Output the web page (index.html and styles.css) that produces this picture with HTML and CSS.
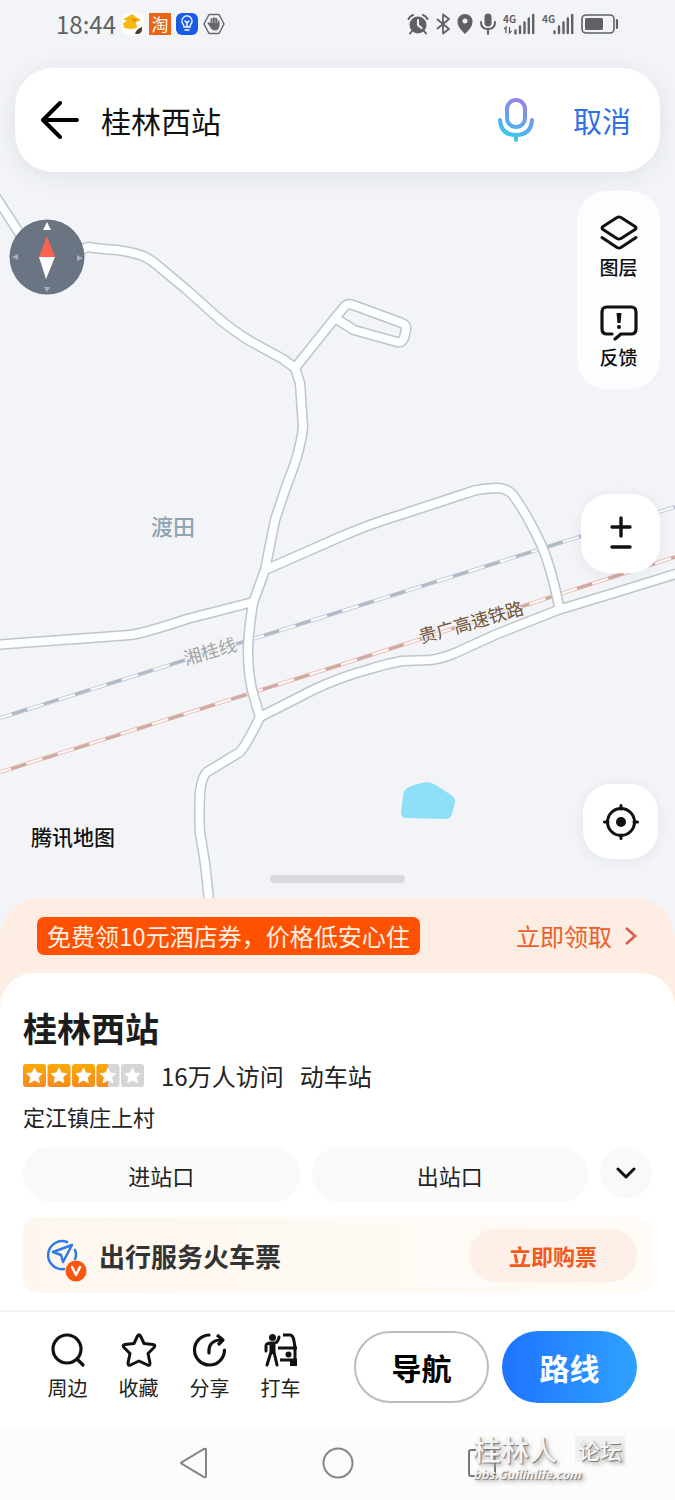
FILE: index.html
```html
<!DOCTYPE html>
<html lang="zh-CN">
<head>
<meta charset="UTF-8">
<meta name="viewport" content="initial-scale=1, width=device-width">
<title>桂林西站</title>
<link rel="stylesheet" href="styles.css">
</head>
<body>
<div class="map">
	<svg class="map-canvas" viewBox="0 0 675 898" preserveAspectRatio="xMidYMin slice">
		<defs>
			<g id="roads">
				<path d="M-6 194L18 231Q32 256 48 257Q68 255 88 247Q100 249 117 250Q132 252 143 256Q150 259 157 265L187 290L217 317Q232 330 250 341L283 359L295 368"/>
				<path d="M295 368L335 318L345 306Q348 303 353 305L402 323Q407 325 406 330L404 338Q402 343 397 342L354 330L335 318"/>
				<path d="M295 368L300 383L303 427Q302 440 295 463L285 490L275 520L265 570L253 603Q248 635 248 650Q248 672 252 690L260 717Q247 744 240 752L207 772Q202 776 200 792Q199 815 200 833Q206 864 209 902"/>
				<path d="M265 570L340 537Q370 524 400 515L467 493Q474 490 483 489L496 488Q507 488 513 495Q525 511 539 540Q550 562 559 606"/>
				<path d="M-6 645L130 635Q145 633 187 619L253 602"/>
				<path d="M260 717L313 690Q340 677 370 669Q385 664 402 661L430 660Q440 659 453 654L497 634L558 610L627 589L682 572"/>
			</g>
		</defs>
		<g class="rail rail-blue">
			<path class="rail-edge" d="M0 718L675 507"/>
			<path class="rail-fill" d="M0 718L675 507"/>
			<path class="rail-dash" d="M12 714L675 507"/>
		</g>
		<g class="rail rail-red">
			<path class="rail-edge" d="M0 772L340 665L675 557"/>
			<path class="rail-fill" d="M0 772L340 665L675 557"/>
			<path class="rail-dash" d="M11 769L340 665L675 557"/>
		</g>
		<use class="road-edge" href="#roads"/>
		<use class="road-fill" href="#roads"/>
		<path class="lake" d="M406 789Q409 786 422 783Q429 781 436 785L451 795Q456 798 455 803L452 814Q450 819 446 819L406 818Q401 818 401 813L403 797Q403 792 406 789Z"/>
		<text class="place" x="173" y="535">渡田</text>
		<text class="rail-name gray" x="210" y="658" transform="rotate(-16 210 651)">湘桂线</text>
		<text class="rail-name brown" x="471" y="629" transform="rotate(-16 471 622)">贵广高速铁路</text>
	</svg>

	<div class="status">
		<span class="clock">18:44</span>
		<div class="notices">
			<svg width="22" height="22" viewBox="0 0 22 22"><rect width="22" height="22" rx="6" fill="#fff"/><path d="M1 6L7 3L10 1L14 4L19 7L14 9L15 15L9 16L2 15L1 10L5 8Z" fill="#f8b912"/><path d="M8 5L17 7L12 9Z" fill="#e98d0c"/><path d="M13 21Q14 16 20 14Q21 19 17 21Z" fill="#4b3f35"/></svg>
			<span class="tao">淘</span>
			<svg width="22" height="22" viewBox="0 0 22 22"><rect width="22" height="22" rx="6" fill="#1a5be6"/><path d="M8 14Q8 12 7 11A5 5 0 1 1 15 11Q14 12 14 14Z M9 17H13M11 14V9M9 8L11 10L13 8" fill="none" stroke="#fff" stroke-width="1.4" stroke-linecap="round"/></svg>
			<svg width="22" height="22" viewBox="0 0 22 22"><path d="M6 1.500H16L21 11L16 20.500H6L1 11Z" fill="none" stroke="#66686b" stroke-width="1.500" stroke-linejoin="round"/><path d="M6.500 13L4.500 10.500Q4.500 8.500 6.500 9.500L7.500 10.500V6Q8.500 4.500 9.500 6V5Q10.500 3.500 12 5V5.500Q13 4 14.500 6V8Q15.500 6.500 16.500 8V13Q15.500 17.500 12 17.500Q8.500 17.500 6.500 13Z" fill="#66686b"/><path d="M9.500 6V10M12 6V10M14.500 7V10" stroke="#f2f4f8" stroke-width=".5"/></svg>
		</div>
		<div class="signals">
			<svg width="22" height="22" viewBox="0 0 22 22"><circle cx="11" cy="12" r="8.500" fill="#5f6163"/><path d="M1.500 6Q3 3 6 2M20.500 6Q19 3 16 2M5 18L3 20.500M17 18L19 20.500" fill="none" stroke="#5f6163" stroke-width="2" stroke-linecap="round"/><path d="M11 7V12L14.500 15" fill="none" stroke="#f2f4f8" stroke-width="2" stroke-linecap="round"/></svg>
			<svg width="14" height="22" viewBox="0 0 14 22"><path d="M1 6L13 16L7 20.500V1.500L13 6L1 16" fill="none" stroke="#5f6163" stroke-width="1.800" stroke-linejoin="round"/></svg>
			<svg width="16" height="22" viewBox="0 0 16 22"><path fill-rule="evenodd" d="M8 1A7.500 7.500 0 0 1 15.500 9Q15.500 14 8 21Q.5 14 .5 9A7.500 7.500 0 0 1 8 1ZM8 5.500A2.500 2.500 0 1 0 8 10.500A2.500 2.500 0 1 0 8 5.500Z" fill="#5f6163"/></svg>
			<svg width="16" height="22" viewBox="0 0 16 22"><rect x="4.500" y="0.500" width="7" height="13" rx="3.500" fill="#5f6163"/><path d="M1 9Q1 16 8 16Q15 16 15 9M8 16V21" fill="none" stroke="#5f6163" stroke-width="2" stroke-linecap="round"/></svg>
			<svg class="signal" width="32" height="22" viewBox="0 0 32 22"><text class="net" x="0" y="10">4G</text><path d="M3 20V14L1 16M6.500 14V20L8.500 18" fill="none" stroke="#5f6163" stroke-width="1.300"/><path d="M12.500 17.500V20.500M17 13.500V20M21.500 9.500V20M25.800 5.500V20M30.200 2V20" stroke="#5f6163" stroke-width="2.400" stroke-linecap="round"/></svg>
			<svg class="signal" width="32" height="22" viewBox="0 0 32 22"><text class="net" x="0" y="10">4G</text><path d="M12.500 18.500V20M17 13.500V20M21.500 9.500V20M25.800 5.500V20M30.200 2V20" stroke="#5f6163" stroke-width="2.400" stroke-linecap="round"/></svg>
			<svg width="38" height="22" viewBox="0 0 38 22"><rect x="1" y="2" width="32" height="18" rx="4" fill="none" stroke="#5f6163" stroke-width="1.600"/><rect x="4" y="5" width="18" height="12" rx="1.500" fill="#5f6163"/><path d="M36 7V15" stroke="#5f6163" stroke-width="2.200" stroke-linecap="round"/></svg>
		</div>
	</div>

	<form class="search">
		<button class="plain" type="button" aria-label="返回">
			<svg width="38" height="38" viewBox="0 0 38 38"><path d="M36 19H2M19 2L2 19L19 36" fill="none" stroke="#000" stroke-width="4" stroke-linecap="round" stroke-linejoin="round"/></svg>
		</button>
		<input class="keyword" type="text" value="桂林西站" aria-label="搜索地点">
		<button class="plain" type="button" aria-label="语音搜索">
			<svg width="38" height="44" viewBox="0 0 38 44">
				<defs><linearGradient id="voice" gradientUnits="userSpaceOnUse" x1="28" y1="2" x2="10" y2="42"><stop offset="0" stop-color="#9a7fe6"/><stop offset=".55" stop-color="#62a5ee"/><stop offset="1" stop-color="#2ed3e8"/></linearGradient></defs>
				<g fill="none" stroke="url(#voice)" stroke-width="4" stroke-linecap="round"><rect x="10" y="2" width="18" height="27" rx="9"/><path d="M3 22Q4 37 19 37Q34 37 35 22M19 37V42"/></g>
			</svg>
		</button>
		<button class="plain cancel" type="button">取消</button>
	</form>

	<div class="tools">
		<div class="tools-left">
			<button class="plain compass" type="button" aria-label="指南针">
				<svg width="76" height="76" viewBox="0 0 76 76"><circle cx="38" cy="38" r="37.500" fill="#66707f" opacity=".97"/><path d="M38 17L46 38H30Z" fill="#fb6350"/><path d="M30 38H46L37 60Z" fill="#fff"/><path d="M34 11L38 3L42 11Z" fill="#fff"/><path d="M3 38L9 35V41ZM74 39L68 36V42ZM35 68H41L38 73Z" fill="#a9b0ba"/></svg>
			</button>
			<span class="brand">腾讯地图</span>
		</div>
		<div class="tools-right">
			<div class="panel">
				<button class="plain tool" type="button">
					<svg width="38" height="36" viewBox="0 0 38 36"><path d="M17 2.500Q19 1.500 21 2.500L35 11.500Q37 13 35 14.500L21 23.500Q19 24.500 17 23.500L3 14.500Q1 13 3 11.500ZM2 22.500L17 32.500Q19 33.500 21 32.500L36 22.500" fill="none" stroke="#111" stroke-width="3" stroke-linecap="round" stroke-linejoin="round"/></svg>
					图层
				</button>
				<button class="plain tool" type="button">
					<svg width="38" height="36" viewBox="0 0 38 36"><path d="M12 29H7Q2 29 2 24V7Q2 2 7 2H31Q36 2 36 7V24Q36 29 31 29H21L15 34" fill="none" stroke="#111" stroke-width="3.200" stroke-linecap="round" stroke-linejoin="round"/><path d="M16.500 8H21.500L20.500 18H17.500Z" fill="#111"/><circle cx="19" cy="22" r="2" fill="#111"/></svg>
					反馈
				</button>
			</div>
			<div class="squares">
				<div class="zoom">
					<button class="plain" type="button" aria-label="放大"><svg width="24" height="24" viewBox="0 0 24 24"><path d="M3 12H21M12 3V21" stroke="#111" stroke-width="3.400" stroke-linecap="round"/></svg></button>
					<button class="plain" type="button" aria-label="缩小"><svg width="24" height="12" viewBox="0 0 24 12"><path d="M3 6H21" stroke="#111" stroke-width="3.400" stroke-linecap="round"/></svg></button>
				</div>
				<button class="plain locate" type="button" aria-label="定位">
					<svg width="38" height="38" viewBox="0 0 38 38"><circle cx="19" cy="19" r="13.500" fill="none" stroke="#111" stroke-width="3"/><circle cx="19" cy="19" r="5" fill="#111"/><path d="M19 2.500V6M19 32V35.500M2.500 19H6M32 19H35.500" stroke="#111" stroke-width="3" stroke-linecap="round"/></svg>
				</button>
			</div>
		</div>
	</div>
	<div class="handle"></div>
</div>

<div class="sheet">
	<div class="promo">
		<span class="promo-tag">免费领10元酒店券，价格低安心住</span>
		<a class="promo-link" href="#">立即领取
			<svg width="14" height="20" viewBox="0 0 14 20"><path d="M2 2L11 10L2 18" fill="none" stroke="#e8564a" stroke-width="2.500"/></svg>
		</a>
	</div>
	<div class="card">
		<h1>桂林西站</h1>
		<div class="rating">
			<svg class="stars" width="122" height="24" viewBox="0 0 122 24" role="img" aria-label="3.5星">
				<defs>
					<linearGradient id="gold" x1="0" y1="0" x2="0" y2="1"><stop offset="0" stop-color="#fbaa05"/><stop offset="1" stop-color="#f98a1a"/></linearGradient>
					<path id="star" d="M11.500 4L13.800 9L19.200 9.600L15.200 13.300L16.300 18.700L11.500 16L6.700 18.700L7.800 13.300L3.800 9.600L9.200 9Z" fill="#fff" stroke="#fff" stroke-linejoin="round"/>
				</defs>
				<g fill="url(#gold)"><rect x="0" width="23" height="23" rx="3"/><rect x="24.500" width="23" height="23" rx="3"/><rect x="49" width="23" height="23" rx="3"/></g>
				<g fill="#d5d5d5"><rect x="73.500" width="23" height="23" rx="3"/><rect x="98" width="23" height="23" rx="3"/></g>
				<path d="M76.500 0H85V23H76.500Q73.500 23 73.500 20V3Q73.500 0 76.500 0Z" fill="url(#gold)"/>
				<use href="#star"/><use href="#star" x="24.500"/><use href="#star" x="49"/><use href="#star" x="73.500"/><use href="#star" x="98"/>
			</svg>
			<span>16万人访问</span>
			<span>动车站</span>
		</div>
		<p class="address">定江镇庄上村</p>
		<div class="gates">
			<button class="gate" type="button">进站口</button>
			<button class="gate" type="button">出站口</button>
			<button class="more" type="button" aria-label="更多">
				<svg width="20" height="14" viewBox="0 0 20 14"><path d="M2 3L10 11L18 3" fill="none" stroke="#111" stroke-width="3" stroke-linecap="round" stroke-linejoin="round"/></svg>
			</button>
		</div>
		<div class="ticket">
			<svg width="42" height="54" viewBox="0 0 42 54"><path d="M22 14A14 14 0 1 0 19 41M30 22Q32 27 30 31" fill="none" stroke="#2f7ae5" stroke-width="2.500" stroke-linecap="round"/><path d="M27 17L18 34L16 27L8 24Z" fill="none" stroke="#2f7ae5" stroke-width="2.500" stroke-linejoin="round"/><circle cx="31" cy="43" r="10.500" fill="#fb560d"/><path d="M27 39L31 47L35 39" fill="none" stroke="#fff" stroke-width="2.500" stroke-linecap="round" stroke-linejoin="round"/></svg>
			<strong>出行服务火车票</strong>
			<button class="buy" type="button">立即购票</button>
		</div>
	</div>
</div>

<div class="actions">
	<button class="plain action" type="button">
		<svg width="36" height="36" viewBox="0 0 36 36"><circle cx="17" cy="17" r="14" fill="none" stroke="#111" stroke-width="3.200"/><path d="M27 27L33 33" stroke="#111" stroke-width="3.200" stroke-linecap="round"/></svg>
		周边
	</button>
	<button class="plain action" type="button">
		<svg width="36" height="36" viewBox="0 0 36 36"><path d="M16.500 4Q18 1.500 19.500 4L23 11.500L32 12.500Q35 13 33 15.500L27 21.500L29 31Q29 34 26.500 33L18 29L9.500 33Q7 34 7 31L9 21.500L3 15.500Q1 13 4 12.500L13 11.500Z" fill="none" stroke="#111" stroke-width="3" stroke-linejoin="round"/></svg>
		收藏
	</button>
	<button class="plain action" type="button">
		<svg width="36" height="36" viewBox="0 0 36 36"><path d="M17 3A15 15 0 1 0 32.500 18M17 21Q16 9 28 8" fill="none" stroke="#111" stroke-width="3.200" stroke-linecap="round"/><path d="M25 3L31 8L26 13" fill="none" stroke="#111" stroke-width="3.200" stroke-linejoin="round"/></svg>
		分享
	</button>
	<button class="plain action" type="button">
		<svg width="36" height="36" viewBox="0 0 36 36"><circle cx="9.500" cy="5.500" r="3.500" fill="#111"/><path d="M3 19V14Q3 11 8 11H11Q15 11 16 5M8 11V20L4 33M11 11V20L14 33" fill="none" stroke="#111" stroke-width="3" stroke-linecap="round" stroke-linejoin="round"/><path d="M8 11H11V22H8Z" fill="#111"/><path d="M20 3H27Q30 3 31 9L32 15M15 16H34M32 16V27M17 28H34M31 28V33" fill="none" stroke="#111" stroke-width="3" stroke-linejoin="round"/><path d="M27 28H34V34H27Z" fill="#111"/><circle cx="25.500" cy="22.500" r="3" fill="#111"/></svg>
		打车
	</button>
	<button class="big navi" type="button">导航</button>
	<button class="big route" type="button">路线</button>
</div>

<div class="system">
	<button class="plain" type="button" aria-label="返回键"><svg width="30" height="34" viewBox="0 0 30 34"><path d="M27 4V30Q27 32 25 31L3 18Q1 17 3 16L25 3Q27 2 27 4Z" fill="none" stroke="#858585" stroke-width="2"/></svg></button>
	<button class="plain" type="button" aria-label="主屏幕"><svg width="34" height="34" viewBox="0 0 34 34"><circle cx="17" cy="17" r="14.500" fill="none" stroke="#858585" stroke-width="2"/></svg></button>
	<button class="plain" type="button" aria-label="最近任务"><svg width="30" height="34" viewBox="0 0 30 34"><rect x="2" y="4" width="26" height="26" rx="2" fill="none" stroke="#777" stroke-width="2"/></svg></button>
	<div class="watermark">
		<div class="watermark-name">桂林人 <span>论坛</span></div>
		<div class="watermark-site">bbs.Guilinlife.com</div>
	</div>
</div>
</body>
</html>
```
FILE: styles.css
```css
* {
	box-sizing: border-box;
}
body {
	display: flex;
	flex-direction: column;
	min-height: 100vh;
	margin: 0;
	background-color: #f2f4f8;
	color: #222;
	font-family: "Noto Sans CJK SC", sans-serif;
}
button {
	font-family: inherit;
	color: inherit;
	border: 0;
	padding: 0;
	cursor: pointer;
}
svg {
	display: block;
	flex: none;
}
.plain {
	background: none;
}

/* map */
.map {
	position: relative;
	display: flex;
	flex-direction: column;
	flex: 1;
}
.map-canvas {
	position: absolute;
	top: 0;
	left: 0;
	width: 100%;
	height: 100%;
}
.road-edge,
.road-fill {
	fill: none;
	stroke-linejoin: round;
}
.road-edge {
	stroke: #bfc5cb;
	stroke-width: 11px;
}
.road-fill {
	stroke: #fdfefe;
	stroke-width: 8px;
}
.rail path {
	fill: none;
}
.rail-edge {
	stroke-width: 4px;
}
.rail-fill {
	stroke: #fbfbfc;
	stroke-width: 2px;
}
.rail-dash {
	stroke-width: 3px;
	stroke-dasharray: 16 17;
}
.rail-blue .rail-edge {
	stroke: #c6ced9;
}
.rail-blue .rail-dash {
	stroke: #b0b9c7;
}
.rail-red .rail-edge {
	stroke: #efc1b5;
}
.rail-red .rail-dash {
	stroke: #cfaaa3;
}
.lake {
	fill: #8fdef7;
}
.place,
.rail-name {
	text-anchor: middle;
	stroke: #f2f4f8;
	stroke-width: 2px;
	paint-order: stroke;
}
.place {
	font-size: 22px;
	font-weight: 500;
	fill: #8fa4af;
}
.rail-name {
	font-size: 18px;
}
.rail-name.gray {
	fill: #a5a5a3;
}
.rail-name.brown {
	fill: #74553a;
}

/* status bar */
.status {
	position: relative;
	display: flex;
	align-items: center;
	height: 48px;
	padding: 0 56px;
	color: #5f6163;
}
.clock {
	font-size: 24px;
	line-height: 32px;
}
.notices,
.signals {
	display: flex;
	align-items: center;
}
.notices {
	gap: 5px;
	margin-left: 6px;
}
.signals {
	gap: 7px;
	margin-left: auto;
}
.tao {
	width: 22px;
	height: 22px;
	background-color: #ea6414;
	color: #fff;
	font-size: 17px;
	line-height: 21px;
	text-align: center;
}
.signal {
	overflow: visible;
}
.net {
	fill: #5f6163;
	font-size: 10px;
	font-weight: 700;
}

/* search bar */
.search {
	position: relative;
	display: flex;
	align-items: center;
	height: 104px;
	margin: 20px 15px 0;
	padding: 0 29px 0 26px;
	background-color: #fff;
	border-radius: 38px;
	box-shadow: 0 4px 24px rgba(30, 40, 60, .09);
}
.keyword {
	flex: 1;
	min-width: 0;
	margin: 0 20px 0 22px;
	padding: 0;
	border: 0;
	outline: 0;
	background: none;
	color: #111;
	font-family: inherit;
	font-size: 30px;
	line-height: 44px;
}
.cancel {
	margin-left: 38px;
	color: #2f70e4;
	font-size: 29px;
	line-height: 44px;
}

/* floating map tools */
.tools {
	position: relative;
	display: flex;
	flex: 1;
	justify-content: space-between;
	padding: 19px 15px 16px 9px;
}
.tools-left {
	display: flex;
	flex-direction: column;
	justify-content: space-between;
	padding-top: 28px;
	padding-bottom: 8px;
}
.brand {
	padding-left: 22px;
	color: #111;
	font-size: 21px;
	font-weight: 500;
	line-height: 30px;
	text-shadow: 0 0 2px #fff, 0 0 2px #fff;
}
.compass {
	width: 76px;
}
.tools-right {
	display: flex;
	flex-direction: column;
	align-items: flex-end;
}
.panel {
	display: flex;
	flex-direction: column;
	gap: 26px;
	width: 83px;
	padding: 24px 0 20px;
	background-color: #fcfdfe;
	border-radius: 30px;
}
.tool {
	display: flex;
	flex-direction: column;
	align-items: center;
	gap: 4px;
	color: #111;
	font-size: 19px;
	font-weight: 500;
	line-height: 24px;
}
.squares {
	display: flex;
	flex: 1;
	flex-direction: column;
	align-items: center;
	justify-content: space-between;
	margin-top: 105px;
}
.zoom,
.locate {
	display: flex;
	flex-direction: column;
	align-items: center;
	justify-content: center;
	background-color: #fff;
	border-radius: 28px;
	box-shadow: 0 2px 14px rgba(30, 40, 60, .07);
}
.zoom {
	gap: 2px;
	width: 79px;
	height: 79px;
}
.locate {
	width: 75px;
	height: 75px;
}
.handle {
	position: relative;
	align-self: center;
	width: 20%;
	height: 8px;
	margin-bottom: 15px;
	background-color: #d9dade;
	border-radius: 4px;
}

/* bottom sheet */
.sheet {
	background-color: #feede3;
	border-radius: 40px 40px 0 0;
}
.promo {
	display: flex;
	align-items: center;
	justify-content: space-between;
	height: 75px;
	padding: 0 37px;
}
.promo-tag {
	padding: 0 10px;
	background-color: #fe5102;
	border-radius: 7px;
	color: #fff0e4;
	font-size: 24px;
	line-height: 38px;
}
.promo-link {
	display: flex;
	align-items: center;
	gap: 12px;
	color: #e9602c;
	font-size: 24px;
	line-height: 38px;
	text-decoration: none;
}
.card {
	padding: 33px 23px 17px;
	background-color: #fff;
	border-radius: 34px 34px 0 0;
}
h1 {
	margin: 0;
	color: #1c1c1c;
	font-size: 34px;
	font-weight: 700;
	line-height: 44px;
}
.rating {
	display: flex;
	align-items: center;
	gap: 16px;
	margin-top: 10px;
	font-size: 24px;
	line-height: 32px;
}
.address {
	margin: 8px 0 15px;
	font-size: 22px;
	line-height: 32px;
}
.gates {
	display: flex;
	gap: 12px;
}
.gate {
	flex: 1;
	height: 55px;
	background-color: #f9f9f9;
	border-radius: 28px;
	font-size: 22px;
}
.more {
	display: flex;
	align-items: center;
	justify-content: center;
	width: 52px;
	height: 52px;
	background-color: #f9f9f9;
	border-radius: 50%;
}
.ticket {
	display: flex;
	align-items: center;
	gap: 12px;
	height: 76px;
	margin-top: 15px;
	padding: 0 15px 0 22px;
	background: linear-gradient(to right, #fef7ef, #fffbf7);
	border-radius: 14px;
}
.ticket strong {
	flex: 1;
	color: #333;
	font-size: 26px;
}
.buy {
	width: 168px;
	height: 53px;
	background-color: #feefe8;
	border-radius: 27px;
	color: #f15a1c;
	font-size: 22px;
	font-weight: 700;
}

/* action bar */
.actions {
	display: flex;
	align-items: center;
	height: 116px;
	padding: 0 38px 4px 32px;
	background-color: #fff;
	border-top: 2px solid #f5f5f5;
}
.action {
	display: flex;
	flex: 1;
	flex-direction: column;
	align-items: center;
	gap: 6px;
	font-size: 20px;
	line-height: 28px;
}
.big {
	width: 135px;
	height: 72px;
	border-radius: 36px;
	font-size: 30px;
	font-weight: 700;
}
.navi {
	margin-left: 38px;
	border: 2px solid #bdbdbd;
	background-color: #fff;
	color: #000;
}
.route {
	margin-left: 13px;
	background: linear-gradient(to right, #1f74ff, #2fa1ff);
	color: #fff;
}

/* system keys */
.system {
	position: relative;
	display: flex;
	align-items: center;
	justify-content: center;
	gap: 112px;
	height: 74px;
	background-color: #fcfcfc;
}
.watermark {
	position: absolute;
	top: 8px;
	right: 50px;
	display: flex;
	flex-direction: column;
	gap: 2px;
	width: 152px;
	color: #f4f4f4;
	text-shadow: 1px 1px 1px #777, 3px 3px 4px #aaa;
}
.watermark-name {
	display: flex;
	align-items: center;
	justify-content: space-between;
	font-size: 28px;
	font-weight: 500;
	line-height: 30px;
}
.watermark-name span {
	padding: 0 3px;
	background-color: #f1f1f1;
	font-size: 22px;
	line-height: 26px;
}
.watermark-site {
	font-size: 12px;
	font-style: italic;
	font-weight: 700;
	line-height: 16px;
}
```
